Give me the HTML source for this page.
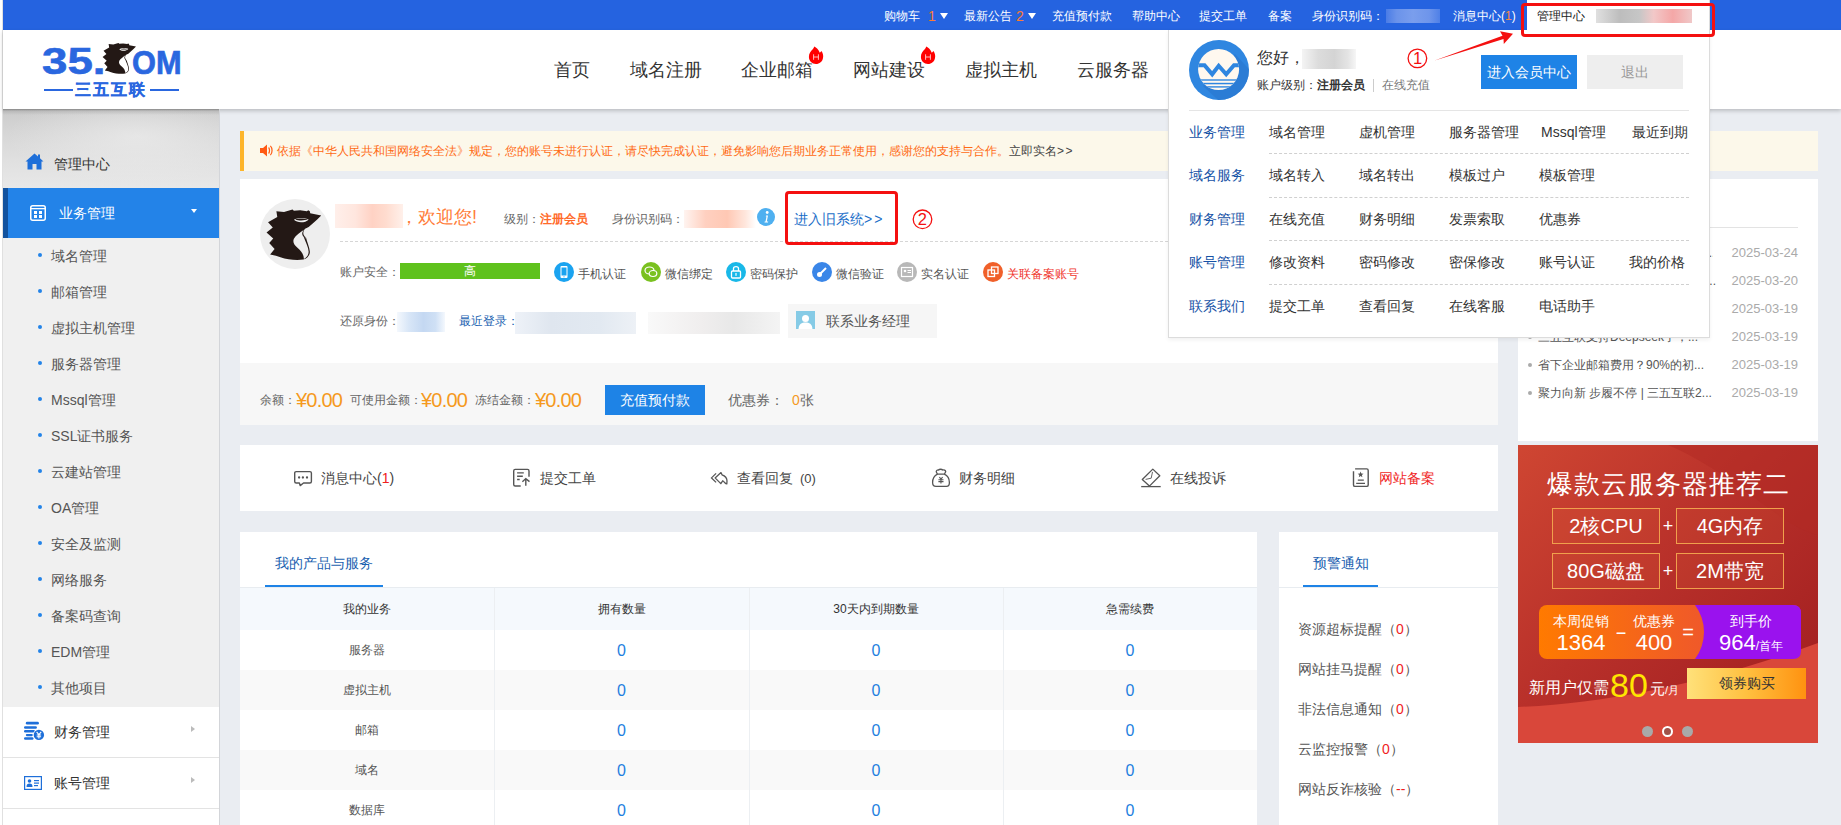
<!DOCTYPE html>
<html><head><meta charset="utf-8">
<style>
*{margin:0;padding:0;box-sizing:border-box}
html,body{width:1841px;height:825px;overflow:hidden}
body{position:relative;background:#eaedf2;font-family:"Liberation Sans",sans-serif;color:#333;font-size:14px}
.a{position:absolute}
.t{position:absolute;white-space:nowrap;line-height:20px}
.blur{position:absolute}
</style></head><body>
<!-- left strip -->
<div class="a" style="left:0;top:0;width:2px;height:825px;background:#fff"></div><div class="a" style="left:2px;top:0;width:1px;height:825px;background:#e0e0e0"></div>

<!-- TOP BAR -->
<div id="topbar" class="a" style="left:3px;top:0;width:1838px;height:30px;background:#2563e0">
</div>
<div class="t" style="left:884px;top:6px;font-size:12px;color:#fff">购物车</div>
<div class="t" style="left:928px;top:6px;font-size:14px;color:#ff7a2f">1</div>
<div class="a" style="left:940px;top:13px;width:0;height:0;border-left:4.5px solid transparent;border-right:4.5px solid transparent;border-top:6px solid #fff"></div>
<div class="t" style="left:964px;top:6px;font-size:12px;color:#fff">最新公告</div>
<div class="t" style="left:1016px;top:6px;font-size:14px;color:#ff7a2f">2</div>
<div class="a" style="left:1028px;top:13px;width:0;height:0;border-left:4.5px solid transparent;border-right:4.5px solid transparent;border-top:6px solid #fff"></div>
<div class="t" style="left:1052px;top:6px;font-size:12px;color:#fff">充值预付款</div>
<div class="t" style="left:1132px;top:6px;font-size:12px;color:#fff">帮助中心</div>
<div class="t" style="left:1199px;top:6px;font-size:12px;color:#fff">提交工单</div>
<div class="t" style="left:1268px;top:6px;font-size:12px;color:#fff">备案</div>
<div class="t" style="left:1312px;top:6px;font-size:12px;color:#fff">身份识别码：</div>
<div class="a" style="left:1386px;top:9px;width:54px;height:14px;background:linear-gradient(90deg,#4a7ce6,#6b93ea 20%,#7a9eed 50%,#6e95eb 80%,#4f80e7)"></div>
<div class="t" style="left:1453px;top:6px;font-size:12px;color:#fff">消息中心(<span style="color:#ff8a3a">1</span>)</div>
<div class="a" style="left:1527px;top:0;width:183px;height:31px;background:#fff;border-right:1px solid #ddd"></div>
<div class="t" style="left:1537px;top:6px;font-size:12px;color:#222">管理中心</div>
<div class="a" style="left:1596px;top:9px;width:96px;height:14px;background:linear-gradient(90deg,#e0e0e0 0%,#bdbdbd 25%,#c6c6c6 45%,#f2c8c8 60%,#f4a7a7 80%,#f0c8c8 100%)"></div>


<!-- HEADER -->
<div id="header" class="a" style="left:3px;top:30px;width:1838px;height:79px;background:#fff;box-shadow:0 2px 4px rgba(0,0,0,.2)"></div>
<!-- logo -->
<svg class="a" style="left:0;top:30px" width="200" height="79" viewBox="0 30 200 79">
<text x="42" y="73.7" font-family="Liberation Sans" font-weight="bold" font-size="36.5" fill="#2a67df" stroke="#2a67df" stroke-width="0.6" textLength="63.5" lengthAdjust="spacingAndGlyphs">35.</text>
<text x="132" y="73.5" font-family="Liberation Sans" font-weight="bold" font-size="32.5" fill="#2a67df" stroke="#2a67df" stroke-width="0.7" textLength="49.5" lengthAdjust="spacingAndGlyphs">OM</text>
<g transform="translate(102.6,43) scale(0.05475) translate(-95,-140)"><path d="M205,160 L290,168 L385,138 L400,152 L470,148 L545,158 L560,148 L578,160 L582,182 L705,205 L660,250 L610,295 L565,335 L525,355 C505,380 500,400 510,425 L522,440 L525,468 L532,440 C545,500 575,560 578,610 C578,650 550,685 505,698 C430,710 330,700 250,672 L200,655 L135,640 L185,580 L125,512 L170,462 L95,395 L165,340 L112,282 L215,222 L205,160 Z" fill="#231815"/><path d="M513,365 C493,390 488,405 498,428 L510,445 C533,505 562,560 565,610 C565,645 545,675 512,690 C508,640 485,600 440,565 C400,535 385,500 400,465 C420,430 470,395 513,365 Z" fill="#fff"/><path d="M400,255 C440,225 530,228 565,250 C530,290 440,295 400,255 Z" fill="#fff"/><path d="M415,250 C450,236 520,238 556,249 C520,263 455,266 415,250 Z" fill="#231815"/></g>
</svg>
<div class="a" style="left:44px;top:89px;width:29px;height:2px;background:#2a67df"></div>
<div class="a" style="left:150px;top:89px;width:29px;height:2px;background:#2a67df"></div>
<div class="t" style="left:75px;top:80px;font-size:16px;line-height:20px;font-weight:bold;color:#2a67df;letter-spacing:2px;-webkit-text-stroke:0.3px #2a67df">三五互联</div>
<!-- nav -->
<div class="t" style="left:554px;top:58px;font-size:18px;line-height:24px;color:#333">首页</div>
<div class="t" style="left:630px;top:58px;font-size:18px;line-height:24px;color:#333">域名注册</div>
<div class="t" style="left:741px;top:58px;font-size:18px;line-height:24px;color:#333">企业邮箱</div>
<div class="t" style="left:853px;top:58px;font-size:18px;line-height:24px;color:#333">网站建设</div>
<div class="t" style="left:965px;top:58px;font-size:18px;line-height:24px;color:#333">虚拟主机</div>
<div class="t" style="left:1077px;top:58px;font-size:18px;line-height:24px;color:#333">云服务器</div>
<svg class="a" style="left:808px;top:46px" width="16" height="19" viewBox="0 0 16 19"><path d="M6.2,0.5 C8.5,1.5 10.5,3.5 11.8,6.7 L13.5,4.9 C15,7 15.5,9.5 15,12 C14.5,15.5 11.5,18 8,18 C4,18 1,15 0.9,11 C0.8,7.5 3,5 4.5,3.5 C5.5,2.5 6,1.5 6.2,0.5 Z" fill="#ff0000"/><path d="M5.6,8.3 V13.8 M10.4,8.3 V13.8 M5.6,11 H10.4" stroke="#ffd0d0" stroke-width="0.9" fill="none"/></svg>
<svg class="a" style="left:920px;top:46px" width="16" height="19" viewBox="0 0 16 19"><path d="M6.2,0.5 C8.5,1.5 10.5,3.5 11.8,6.7 L13.5,4.9 C15,7 15.5,9.5 15,12 C14.5,15.5 11.5,18 8,18 C4,18 1,15 0.9,11 C0.8,7.5 3,5 4.5,3.5 C5.5,2.5 6,1.5 6.2,0.5 Z" fill="#ff0000"/><path d="M5.6,8.3 V13.8 M10.4,8.3 V13.8 M5.6,11 H10.4" stroke="#ffd0d0" stroke-width="0.9" fill="none"/></svg>


<!-- SIDEBAR -->
<div id="sidebar" class="a" style="left:3px;top:109px;width:217px;height:716px;background:#fff;border-right:1px solid #d3d5d9"></div>
<div class="a" style="left:3px;top:109px;width:216px;height:79px;background:linear-gradient(180deg,rgba(110,110,110,.75) 0px,rgba(150,150,150,.35) 2px,rgba(200,200,200,0) 6px),radial-gradient(ellipse 60% 60% at 62% 35%,rgba(240,240,240,.6),rgba(240,240,240,0)),linear-gradient(180deg,#cbcbcb 0%,#d6d6d6 30%,#e0e0e0 65%,#e8e8e8 100%)"></div>
<svg class="a" style="left:25px;top:153px" width="19" height="17" viewBox="0 0 19 17"><path d="M9.5,0.5 L0.5,8.5 L2.5,8.5 L2.5,16.5 L7.5,16.5 L7.5,11 L11.5,11 L11.5,16.5 L16.5,16.5 L16.5,8.5 L18.5,8.5 L15,5.2 L15,1.5 L13,1.5 L13,3.5 Z" fill="#1e6fd9"/></svg>
<div class="t" style="left:54px;top:154px;font-size:14px;color:#333">管理中心</div>
<div class="a" style="left:3px;top:188px;width:216px;height:50px;background:#2383e8"></div>
<div class="a" style="left:3px;top:188px;width:5px;height:50px;background:#12529e"></div>
<svg class="a" style="left:30px;top:205px" width="16" height="16" viewBox="0 0 16 16"><rect x="0.75" y="0.75" width="14.5" height="14.5" rx="2" fill="none" stroke="#fff" stroke-width="1.5"/><rect x="1" y="3" width="14" height="1.3" fill="#fff"/><rect x="4" y="6" width="3" height="3" fill="#fff"/><rect x="9" y="6" width="3" height="3" fill="#fff"/><rect x="4" y="10" width="3" height="3" fill="#fff"/><rect x="9" y="10" width="3" height="3" fill="#fff"/></svg>
<div class="t" style="left:59px;top:203px;font-size:14px;color:#fff">业务管理</div>
<div class="a" style="left:191px;top:209px;width:0;height:0;border-left:3.5px solid transparent;border-right:3.5px solid transparent;border-top:4px solid #fff"></div>
<div class="a" style="left:3px;top:238px;width:216px;height:469px;background:#f0f0f0"></div>
<div class="a" style="left:38px;top:253px;width:4px;height:4px;border-radius:50%;background:#2383e8"></div>
<div class="t" style="left:51px;top:246px;font-size:14px;color:#555">域名管理</div>
<div class="a" style="left:38px;top:289px;width:4px;height:4px;border-radius:50%;background:#2383e8"></div>
<div class="t" style="left:51px;top:282px;font-size:14px;color:#555">邮箱管理</div>
<div class="a" style="left:38px;top:325px;width:4px;height:4px;border-radius:50%;background:#2383e8"></div>
<div class="t" style="left:51px;top:318px;font-size:14px;color:#555">虚拟主机管理</div>
<div class="a" style="left:38px;top:361px;width:4px;height:4px;border-radius:50%;background:#2383e8"></div>
<div class="t" style="left:51px;top:354px;font-size:14px;color:#555">服务器管理</div>
<div class="a" style="left:38px;top:397px;width:4px;height:4px;border-radius:50%;background:#2383e8"></div>
<div class="t" style="left:51px;top:390px;font-size:14px;color:#555">Mssql管理</div>
<div class="a" style="left:38px;top:433px;width:4px;height:4px;border-radius:50%;background:#2383e8"></div>
<div class="t" style="left:51px;top:426px;font-size:14px;color:#555">SSL证书服务</div>
<div class="a" style="left:38px;top:469px;width:4px;height:4px;border-radius:50%;background:#2383e8"></div>
<div class="t" style="left:51px;top:462px;font-size:14px;color:#555">云建站管理</div>
<div class="a" style="left:38px;top:505px;width:4px;height:4px;border-radius:50%;background:#2383e8"></div>
<div class="t" style="left:51px;top:498px;font-size:14px;color:#555">OA管理</div>
<div class="a" style="left:38px;top:541px;width:4px;height:4px;border-radius:50%;background:#2383e8"></div>
<div class="t" style="left:51px;top:534px;font-size:14px;color:#555">安全及监测</div>
<div class="a" style="left:38px;top:577px;width:4px;height:4px;border-radius:50%;background:#2383e8"></div>
<div class="t" style="left:51px;top:570px;font-size:14px;color:#555">网络服务</div>
<div class="a" style="left:38px;top:613px;width:4px;height:4px;border-radius:50%;background:#2383e8"></div>
<div class="t" style="left:51px;top:606px;font-size:14px;color:#555">备案码查询</div>
<div class="a" style="left:38px;top:649px;width:4px;height:4px;border-radius:50%;background:#2383e8"></div>
<div class="t" style="left:51px;top:642px;font-size:14px;color:#555">EDM管理</div>
<div class="a" style="left:38px;top:685px;width:4px;height:4px;border-radius:50%;background:#2383e8"></div>
<div class="t" style="left:51px;top:678px;font-size:14px;color:#555">其他项目</div>
<div class="a" style="left:3px;top:757px;width:216px;height:1px;background:#e3e3e3"></div>
<div class="a" style="left:3px;top:808px;width:216px;height:1px;background:#e3e3e3"></div>
<svg class="a" style="left:24px;top:721px" width="22" height="21" viewBox="0 0 22 21"><rect x="1.8" y="0.8" width="13.1" height="2.7" rx="1.3" fill="#1e6fd9"/><rect x="0" y="5.2" width="12.9" height="2.5" rx="1.2" fill="#1e6fd9"/><rect x="0" y="9" width="11" height="2.5" rx="1.2" fill="#1e6fd9"/><rect x="1.8" y="13" width="7" height="2.2" rx="1.1" fill="#1e6fd9"/><rect x="0" y="16.3" width="9.5" height="2.5" rx="1.2" fill="#1e6fd9"/><circle cx="14.9" cy="13.9" r="5.8" fill="#fff"/><circle cx="14.9" cy="13.9" r="5.2" fill="#1e6fd9"/><path d="M12.6,10.8 L14.9,13.6 L17.2,10.8 M14.9,13.6 L14.9,17.6 M12.7,14 L17.1,14 M12.7,15.7 L17.1,15.7" stroke="#fff" stroke-width="1.1" fill="none"/></svg>
<div class="t" style="left:54px;top:722px;font-size:14px;color:#333">财务管理</div>
<div class="a" style="left:191px;top:726px;width:0;height:0;border-top:3.5px solid transparent;border-bottom:3.5px solid transparent;border-left:4px solid #bbb"></div>
<svg class="a" style="left:24px;top:776px" width="18" height="14" viewBox="0 0 18 14"><rect x="0.6" y="0.6" width="16.8" height="12.8" fill="none" stroke="#1e6fd9" stroke-width="1.2"/><circle cx="5.5" cy="5" r="1.8" fill="#1e6fd9"/><path d="M2.5,11 C2.5,8 3.5,7.5 5.5,7.5 C7.5,7.5 8.5,8 8.5,11 Z" fill="#1e6fd9"/><rect x="10" y="4" width="5" height="1.2" fill="#1e6fd9"/><rect x="10" y="6.5" width="5" height="1.2" fill="#1e6fd9"/><rect x="10" y="9" width="4" height="1.2" fill="#1e6fd9"/></svg>
<div class="t" style="left:54px;top:773px;font-size:14px;color:#333">账号管理</div>
<div class="a" style="left:191px;top:777px;width:0;height:0;border-top:3.5px solid transparent;border-bottom:3.5px solid transparent;border-left:4px solid #bbb"></div>


<!-- MAIN -->
<div id="main">
<!-- notice -->
<div class="a" style="left:240px;top:131px;width:1578px;height:40px;background:#fcf8ea;border-left:4px solid #fdb52a"></div>
<svg class="a" style="left:260px;top:144px" width="13" height="13" viewBox="0 0 13 13"><path d="M0,4 L3,4 L7,0.5 L7,12.5 L3,9 L0,9 Z" fill="#ff5a14"/><path d="M8.6,3.5 C9.8,4.8 9.8,8.2 8.6,9.5" stroke="#ff5a14" stroke-width="1.2" fill="none"/><path d="M10.4,1.8 C12.6,4 12.6,9 10.4,11.2" stroke="#ff5a14" stroke-width="1.2" fill="none"/></svg>
<div class="t" style="left:277px;top:141px;font-size:12px;color:#ff6a14">依据《中华人民共和国网络安全法》规定，您的账号未进行认证，请尽快完成认证，避免影响您后期业务正常使用，感谢您的支持与合作。<span style="color:#444">立即实名<span style="letter-spacing:1.5px">&gt;&gt;</span></span></div>

<!-- user card -->
<div class="a" style="left:240px;top:179px;width:1258px;height:184px;background:#fff"></div>
<div class="a" style="left:240px;top:363px;width:1258px;height:62px;background:#f7f7f7"></div>
<div class="a" style="left:260px;top:199px;width:70px;height:70px;border-radius:50%;background:#eee"></div>
<svg class="a" style="left:258px;top:197px" width="74" height="74" viewBox="0 0 825 825"><path d="M205,160 L290,168 L385,138 L400,152 L470,148 L545,158 L560,148 L578,160 L582,182 L705,205 L660,250 L610,295 L565,335 L525,355 C505,380 500,400 510,425 L522,440 L525,468 L532,440 C545,500 575,560 578,610 C578,650 550,685 505,698 C430,710 330,700 250,672 L200,655 L135,640 L185,580 L125,512 L170,462 L95,395 L165,340 L112,282 L215,222 L205,160 Z" fill="#231815"/><path d="M513,365 C493,390 488,405 498,428 L510,445 C533,505 562,560 565,610 C565,645 545,675 512,690 C508,640 485,600 440,565 C400,535 385,500 400,465 C420,430 470,395 513,365 Z" fill="#eee"/><path d="M400,255 C440,225 530,228 565,250 C530,290 440,295 400,255 Z" fill="#eee"/><path d="M415,250 C450,236 520,238 556,249 C520,263 455,266 415,250 Z" fill="#231815"/></svg>
<div class="a" style="left:335px;top:204px;width:68px;height:24px;background:linear-gradient(90deg,#ffefea,#ffe6de 30%,#ffd2c4 55%,#ffdccf 75%,#fff0ea)"></div>
<div class="t" style="left:400px;top:205px;font-size:18px;line-height:24px;color:#ff7d3a">，欢迎您!</div>
<div class="t" style="left:504px;top:209px;font-size:12px;color:#666">级别：<span style="color:#ff6a2a;font-weight:bold">注册会员</span></div>
<div class="t" style="left:612px;top:209px;font-size:12px;color:#666">身份识别码：</div>
<div class="a" style="left:684px;top:210px;width:72px;height:18px;background:linear-gradient(90deg,#fff4f0,#ffd0c0 30%,#ffc8b4 60%,#ffe6dc 85%,#fff)"></div>
<svg class="a" style="left:757px;top:208px" width="18" height="18" viewBox="0 0 18 18"><circle cx="9" cy="9" r="9" fill="#4fb0f0"/><circle cx="10.2" cy="4.5" r="1.4" fill="#fff"/><path d="M9,7.5 L11,7.5 L9.8,13.5 L11.2,13.5 L11,14.5 L7.5,14.5 L7.7,13.5 L8.5,13.5 L9.5,8.5 L8.8,8.5 Z" fill="#fff"/></svg>
<div class="t" style="left:794px;top:209px;font-size:14px;color:#1a6ec8">进入旧系统<span style="letter-spacing:2px">&gt;&gt;</span></div>
<div class="a" style="left:340px;top:241px;width:828px;height:0;border-top:1px dashed #d6d6d6"></div>
<div class="t" style="left:340px;top:262px;font-size:12px;color:#666">账户安全：</div>
<div class="a" style="left:400px;top:263px;width:140px;height:16px;background:#5fc21d;color:#fff;font-size:12px;line-height:16px;text-align:center">高</div>
<svg class="a" style="left:554px;top:262px;color:#1aa3f0" width="20" height="20" viewBox="0 0 20 20"><circle cx="10" cy="10" r="10" fill="#1aa3f0"/><rect x="6.5" y="4" width="7" height="12" rx="1" fill="#fff"/><rect x="7.5" y="5.5" width="5" height="8" fill="currentColor"/><circle cx="10" cy="14.8" r="0.6" fill="currentColor"/></svg>
<div class="t" style="left:578px;top:264px;font-size:12px;color:#555">手机认证</div>
<svg class="a" style="left:641px;top:262px;color:#7ac120" width="20" height="20" viewBox="0 0 20 20"><circle cx="10" cy="10" r="10" fill="#7ac120"/><ellipse cx="8.5" cy="8.5" rx="4.5" ry="3.5" fill="none" stroke="#fff" stroke-width="1.2"/><ellipse cx="12" cy="11.5" rx="3.8" ry="3" fill="currentColor" stroke="#fff" stroke-width="1.2"/></svg>
<div class="t" style="left:665px;top:264px;font-size:12px;color:#555">微信绑定</div>
<svg class="a" style="left:726px;top:262px;color:#19b8e8" width="20" height="20" viewBox="0 0 20 20"><circle cx="10" cy="10" r="10" fill="#19b8e8"/><rect x="5.5" y="9" width="9" height="7" rx="1" fill="none" stroke="#fff" stroke-width="1.3"/><path d="M7.5,9 L7.5,6.5 C7.5,4 12.5,4 12.5,6.5 L12.5,9" fill="none" stroke="#fff" stroke-width="1.3"/><rect x="9.4" y="11" width="1.2" height="2.8" fill="#fff"/></svg>
<div class="t" style="left:750px;top:264px;font-size:12px;color:#555">密码保护</div>
<svg class="a" style="left:812px;top:262px;color:#3a86e8" width="20" height="20" viewBox="0 0 20 20"><circle cx="10" cy="10" r="10" fill="#3a86e8"/><circle cx="7.5" cy="12.5" r="2.5" fill="#fff"/><path d="M8.5,11.5 L14,6" stroke="#fff" stroke-width="2"/></svg>
<div class="t" style="left:836px;top:264px;font-size:12px;color:#555">微信验证</div>
<svg class="a" style="left:897px;top:262px;color:#b8b8b8" width="20" height="20" viewBox="0 0 20 20"><circle cx="10" cy="10" r="10" fill="#b8b8b8"/><rect x="4.5" y="5.5" width="11" height="9" fill="none" stroke="#fff" stroke-width="1.2"/><circle cx="8" cy="9" r="1.3" fill="#fff"/><rect x="10.5" y="8" width="3.5" height="1" fill="#fff"/><rect x="10.5" y="10" width="3.5" height="1" fill="#fff"/></svg>
<div class="t" style="left:921px;top:264px;font-size:12px;color:#555">实名认证</div>
<svg class="a" style="left:983px;top:262px;color:#f0602a" width="20" height="20" viewBox="0 0 20 20"><circle cx="10" cy="10" r="10" fill="#f0602a"/><rect x="5" y="8" width="6.5" height="6.5" fill="none" stroke="#fff" stroke-width="1.3"/><rect x="8.5" y="5" width="6.5" height="6.5" fill="none" stroke="#fff" stroke-width="1.3"/></svg>
<div class="t" style="left:1007px;top:264px;font-size:12px;color:#f0362e">关联备案账号</div>
<div class="t" style="left:340px;top:311px;font-size:12px;color:#666">还原身份：</div>
<div class="a" style="left:397px;top:312px;width:48px;height:20px;background:linear-gradient(90deg,#f4f8fd,#d8e6f7 25%,#c4d8f2 55%,#cfe0f5 80%,#f4f8fd)"></div>
<div class="t" style="left:459px;top:311px;font-size:12px;color:#1a5fb0">最近登录：</div>
<div class="a" style="left:515px;top:312px;width:121px;height:22px;background:linear-gradient(90deg,#eef2f8,#dfe6ef 30%,#e2e9f1 70%,#edf1f6)"></div>
<div class="a" style="left:648px;top:312px;width:132px;height:22px;background:linear-gradient(90deg,#f9f9f9,#f0eeee 40%,#e8e8e8 65%,#f4f4f4)"></div>
<div class="a" style="left:788px;top:304px;width:149px;height:34px;background:#f6f6f6"></div>
<svg class="a" style="left:796px;top:311px" width="19" height="18" viewBox="0 0 19 18" preserveAspectRatio="none"><rect width="19" height="19" fill="#86cbe6"/><circle cx="9.5" cy="7.5" r="3.5" fill="#fff"/><path d="M2.5,19 C2.5,13 5.5,11.5 9.5,11.5 C13.5,11.5 16.5,13 16.5,19 Z" fill="#fff"/></svg>
<div class="t" style="left:826px;top:311px;font-size:14px;color:#555">联系业务经理</div>

<!-- balance -->
<div class="t" style="left:260px;top:390px;font-size:12px;color:#666">余额：</div>
<div class="t" style="left:296px;top:387px;font-size:20px;line-height:26px;color:#f59a1e;letter-spacing:-0.8px">¥0.00</div>
<div class="t" style="left:350px;top:390px;font-size:12px;color:#666">可使用金额：</div>
<div class="t" style="left:421px;top:387px;font-size:20px;line-height:26px;color:#f59a1e;letter-spacing:-0.8px">¥0.00</div>
<div class="t" style="left:475px;top:390px;font-size:12px;color:#666">冻结金额：</div>
<div class="t" style="left:535px;top:387px;font-size:20px;line-height:26px;color:#f59a1e;letter-spacing:-0.8px">¥0.00</div>
<div class="a" style="left:605px;top:385px;width:100px;height:30px;background:#1e83e6;color:#fff;font-size:14px;line-height:30px;text-align:center">充值预付款</div>
<div class="t" style="left:728px;top:390px;font-size:14px;color:#666">优惠券：<span style="color:#f59a1e;margin-left:8px">0</span>张</div>

<!-- shortcuts -->
<div class="a" style="left:240px;top:445px;width:1258px;height:66px;background:#fff"></div>
<svg class="a" style="left:289px;top:465px" width="28" height="26" viewBox="0 0 28 26"><path d="M10.4,18 L7.2,18 Q5.7,18 5.7,16.5 L5.7,8.1 Q5.7,6.6 7.2,6.6 L20.9,6.6 Q22.4,6.6 22.4,8.1 L22.4,16.5 Q22.4,18 20.9,18 L14.5,18 L11.2,20.6 Z" fill="none" stroke="#555" stroke-width="1.4" stroke-linejoin="round"/><circle cx="10.1" cy="12.5" r="1.15" fill="#555"/><circle cx="13.9" cy="12.5" r="1.15" fill="#555"/><circle cx="18" cy="12.5" r="1.15" fill="#555"/></svg>
<svg class="a" style="left:508px;top:465px" width="28" height="26" viewBox="0 0 28 26"><path d="M12.7,21 L7.2,21 Q5.7,21 5.7,19.5 L5.7,5.9 Q5.7,4.4 7.2,4.4 L19.5,4.4 Q21,4.4 21,5.9 L21,11.8" fill="none" stroke="#555" stroke-width="1.4"/><path d="M9.1,7.9 L15.8,7.9 M9.1,11.2 L14.8,11.2 M9.1,14.5 L11.7,14.5" stroke="#555" stroke-width="1.4"/><path d="M17.8,14 L17.8,20.8 M14.4,16.7 L17.8,13.6 L21.5,16.6" fill="none" stroke="#555" stroke-width="1.4"/></svg>
<svg class="a" style="left:706px;top:465px" width="28" height="26" viewBox="0 0 28 26"><path d="M10.1,8.4 L5.5,12.9 L10.1,17.4" fill="none" stroke="#555" stroke-width="1.3"/><path d="M9.1,12.9 L15,7.6 L16,9.8 C19,10.8 21,13 21,16 L20.8,18.9 C19.5,19 18.5,17 16.7,15.8 L14.8,18.6 Z" fill="none" stroke="#555" stroke-width="1.3" stroke-linejoin="round"/></svg>
<svg class="a" style="left:927px;top:463px" width="28" height="28" viewBox="0 0 28 28"><path d="M10.5,11.2 L9.2,8.8 C9.5,7.2 10.5,6.8 11.5,7 C12.3,6 14.8,6 15.8,7 C17,6.6 18.5,7.2 18.7,8.7 L17.3,11.2 Z" fill="none" stroke="#555" stroke-width="1.3" stroke-linejoin="round"/><path d="M10.5,11.2 C7,13 5.6,16.5 5.6,19.5 C5.6,22 7,23.4 9,23.4 L19.5,23.4 C21.5,23.4 22.4,22 22.4,19.5 C22.4,16.5 21,13 17.3,11.2" fill="none" stroke="#555" stroke-width="1.3"/><path d="M12.4,14.2 L13.95,16.2 L15.6,14.2 M13.95,16.2 L13.95,20.4 M11.4,16.8 L16.5,16.8 M11.4,18.6 L16.5,18.6" fill="none" stroke="#555" stroke-width="1.1"/></svg>
<svg class="a" style="left:1138px;top:465px" width="28" height="26" viewBox="0 0 28 26"><path d="M14.8,4.1 L21.8,10.7 L11.4,21.1 L4.3,14.5 Z" fill="none" stroke="#555" stroke-width="1.3" stroke-linejoin="round"/><path d="M14.5,6.9 L13.2,13.2 L7.6,14.4" fill="none" stroke="#666" stroke-width="1"/><path d="M3.2,21.6 L22.7,21.6" stroke="#555" stroke-width="1.3"/></svg>
<svg class="a" style="left:1348px;top:465px" width="28" height="26" viewBox="0 0 28 26"><path d="M7.1,3.9 L18.7,3.9 Q20.2,3.9 20.2,5.4 L20.2,19.9 Q20.2,21.4 18.7,21.4 L7,21.4 Q5.5,21.4 5.5,19.9 L5.5,6.2" fill="none" stroke="#555" stroke-width="1.4"/><polygon points="12.60,6.60 13.39,8.61 15.55,8.74 13.88,10.12 14.42,12.21 12.60,11.05 10.78,12.21 11.32,10.12 9.65,8.74 11.81,8.61" fill="#555"/><path d="M9.8,15.1 L15.8,15.1 M8.2,18.3 L17,18.3" stroke="#555" stroke-width="1.3"/></svg>
<div class="t" style="left:321px;top:468px;font-size:14px;color:#444">消息中心(<span style="color:#f02020">1</span>)</div>
<div class="t" style="left:540px;top:468px;font-size:14px;color:#444">提交工单</div>
<div class="t" style="left:737px;top:468px;font-size:14px;color:#444">查看回复 <span style="font-size:13px;margin-left:3px">(0)</span></div>
<div class="t" style="left:959px;top:468px;font-size:14px;color:#444">财务明细</div>
<div class="t" style="left:1170px;top:468px;font-size:14px;color:#444">在线投诉</div>
<div class="t" style="left:1379px;top:468px;font-size:14px;color:#f02828">网站备案</div>
<div class="a" style="left:240px;top:532px;width:1017px;height:293px;background:#fff"></div>
<div class="t" style="left:275px;top:553px;font-size:14px;color:#1a5fb0">我的产品与服务</div>
<div class="a" style="left:240px;top:587px;width:1017px;height:1px;background:#e8ecf0"></div>
<div class="a" style="left:265px;top:585px;width:118px;height:2px;background:#1e83e6"></div>
<div class="a" style="left:240px;top:588px;width:1017px;height:42px;background:#f5f9fd"></div>
<div class="a" style="left:240px;top:670px;width:1017px;height:40px;background:#f9f9f9"></div>
<div class="a" style="left:240px;top:750px;width:1017px;height:40px;background:#f9f9f9"></div>
<div class="a" style="left:494px;top:588px;width:1px;height:237px;background:#eceff2"></div>
<div class="a" style="left:749px;top:588px;width:1px;height:237px;background:#eceff2"></div>
<div class="a" style="left:1003px;top:588px;width:1px;height:237px;background:#eceff2"></div>
<div class="a" style="left:240px;top:599px;width:254px;text-align:center;font-size:12px;line-height:20px;color:#333">我的业务</div>
<div class="a" style="left:494px;top:599px;width:255px;text-align:center;font-size:12px;line-height:20px;color:#333">拥有数量</div>
<div class="a" style="left:749px;top:599px;width:254px;text-align:center;font-size:12px;line-height:20px;color:#333">30天内到期数量</div>
<div class="a" style="left:1003px;top:599px;width:254px;text-align:center;font-size:12px;line-height:20px;color:#333">急需续费</div>
<div class="a" style="left:240px;top:640px;width:254px;text-align:center;font-size:12px;line-height:20px;color:#555">服务器</div>
<div class="a" style="left:494px;top:640px;width:255px;text-align:center;font-size:16px;line-height:22px;color:#1e7fe0">0</div>
<div class="a" style="left:749px;top:640px;width:254px;text-align:center;font-size:16px;line-height:22px;color:#1e7fe0">0</div>
<div class="a" style="left:1003px;top:640px;width:254px;text-align:center;font-size:16px;line-height:22px;color:#1e7fe0">0</div>
<div class="a" style="left:240px;top:680px;width:254px;text-align:center;font-size:12px;line-height:20px;color:#555">虚拟主机</div>
<div class="a" style="left:494px;top:680px;width:255px;text-align:center;font-size:16px;line-height:22px;color:#1e7fe0">0</div>
<div class="a" style="left:749px;top:680px;width:254px;text-align:center;font-size:16px;line-height:22px;color:#1e7fe0">0</div>
<div class="a" style="left:1003px;top:680px;width:254px;text-align:center;font-size:16px;line-height:22px;color:#1e7fe0">0</div>
<div class="a" style="left:240px;top:720px;width:254px;text-align:center;font-size:12px;line-height:20px;color:#555">邮箱</div>
<div class="a" style="left:494px;top:720px;width:255px;text-align:center;font-size:16px;line-height:22px;color:#1e7fe0">0</div>
<div class="a" style="left:749px;top:720px;width:254px;text-align:center;font-size:16px;line-height:22px;color:#1e7fe0">0</div>
<div class="a" style="left:1003px;top:720px;width:254px;text-align:center;font-size:16px;line-height:22px;color:#1e7fe0">0</div>
<div class="a" style="left:240px;top:760px;width:254px;text-align:center;font-size:12px;line-height:20px;color:#555">域名</div>
<div class="a" style="left:494px;top:760px;width:255px;text-align:center;font-size:16px;line-height:22px;color:#1e7fe0">0</div>
<div class="a" style="left:749px;top:760px;width:254px;text-align:center;font-size:16px;line-height:22px;color:#1e7fe0">0</div>
<div class="a" style="left:1003px;top:760px;width:254px;text-align:center;font-size:16px;line-height:22px;color:#1e7fe0">0</div>
<div class="a" style="left:240px;top:800px;width:254px;text-align:center;font-size:12px;line-height:20px;color:#555">数据库</div>
<div class="a" style="left:494px;top:800px;width:255px;text-align:center;font-size:16px;line-height:22px;color:#1e7fe0">0</div>
<div class="a" style="left:749px;top:800px;width:254px;text-align:center;font-size:16px;line-height:22px;color:#1e7fe0">0</div>
<div class="a" style="left:1003px;top:800px;width:254px;text-align:center;font-size:16px;line-height:22px;color:#1e7fe0">0</div>
<div class="a" style="left:1279px;top:532px;width:219px;height:293px;background:#fff"></div>
<div class="t" style="left:1313px;top:553px;font-size:14px;color:#1a5fb0">预警通知</div>
<div class="a" style="left:1279px;top:587px;width:219px;height:1px;background:#e8ecf0"></div>
<div class="a" style="left:1303px;top:585px;width:75px;height:2px;background:#1e83e6"></div>
<div class="t" style="left:1298px;top:619px;font-size:14px;color:#555">资源超标提醒（<span style="color:#f01e1e">0</span>）</div>
<div class="t" style="left:1298px;top:659px;font-size:14px;color:#555">网站挂马提醒（<span style="color:#f01e1e">0</span>）</div>
<div class="t" style="left:1298px;top:699px;font-size:14px;color:#555">非法信息通知（<span style="color:#f01e1e">0</span>）</div>
<div class="t" style="left:1298px;top:739px;font-size:14px;color:#555">云监控报警（<span style="color:#f01e1e">0</span>）</div>
<div class="t" style="left:1298px;top:779px;font-size:14px;color:#555">网站反诈核验（<span style="color:#f01e1e">--</span>）</div>
</div>

<!-- RIGHT -->
<div id="right">
<div class="a" style="left:1518px;top:179px;width:300px;height:262px;background:#fff"></div>
<div class="a" style="left:1538px;top:227px;width:260px;height:1px;background:#e3e3e3"></div>
<div class="a" style="left:1528px;top:251px;width:4px;height:4px;border-radius:50%;background:#aaa"></div>
<div class="t" style="left:1538px;top:243px;width:175px;overflow:hidden;text-align:right;font-size:12px;color:#555">三五互联2025年度云服务器大促...</div>
<div class="t" style="left:1700px;top:243px;width:98px;text-align:right;font-size:13px;color:#aaa">2025-03-24</div>
<div class="a" style="left:1528px;top:279px;width:4px;height:4px;border-radius:50%;background:#aaa"></div>
<div class="t" style="left:1538px;top:271px;width:178px;overflow:hidden;text-align:right;font-size:12px;color:#555">企业邮箱安全防护升级公告公告...</div>
<div class="t" style="left:1700px;top:271px;width:98px;text-align:right;font-size:13px;color:#aaa">2025-03-20</div>
<div class="a" style="left:1528px;top:307px;width:4px;height:4px;border-radius:50%;background:#aaa"></div>
<div class="t" style="left:1538px;top:299px;font-size:12px;color:#555">三五互联邮箱新功能上线...</div>
<div class="t" style="left:1700px;top:299px;width:98px;text-align:right;font-size:13px;color:#aaa">2025-03-19</div>
<div class="a" style="left:1528px;top:335px;width:4px;height:4px;border-radius:50%;background:#aaa"></div>
<div class="t" style="left:1538px;top:327px;font-size:12px;color:#555">三五互联支持Deepseek了，...</div>
<div class="t" style="left:1700px;top:327px;width:98px;text-align:right;font-size:13px;color:#aaa">2025-03-19</div>
<div class="a" style="left:1528px;top:363px;width:4px;height:4px;border-radius:50%;background:#aaa"></div>
<div class="t" style="left:1538px;top:355px;font-size:12px;color:#555">省下企业邮箱费用？90%的初...</div>
<div class="t" style="left:1700px;top:355px;width:98px;text-align:right;font-size:13px;color:#aaa">2025-03-19</div>
<div class="a" style="left:1528px;top:391px;width:4px;height:4px;border-radius:50%;background:#aaa"></div>
<div class="t" style="left:1538px;top:383px;font-size:12px;color:#555">聚力向新 步履不停 | 三五互联2...</div>
<div class="t" style="left:1700px;top:383px;width:98px;text-align:right;font-size:13px;color:#aaa">2025-03-19</div>
<!-- ad -->
<div class="a" style="left:1518px;top:445px;width:300px;height:298px;overflow:hidden;background:linear-gradient(135deg,#cf4632 0%,#b8302a 45%,#9e1c1e 100%)">
 <svg class="a" style="left:0;top:0" width="300" height="298" viewBox="0 0 300 298"><path d="M0,262 C90,258 190,238 300,198 L300,298 L0,298 Z" fill="#d9473a"/><path d="M150,0 C220,30 260,80 300,90 L300,0 Z" fill="#b22a24" opacity=".5"/></svg>
 <div class="t" style="left:0;top:22px;width:300px;text-align:center;font-size:26px;line-height:34px;color:#fff;letter-spacing:1px">爆款云服务器推荐二</div>
 <div class="a" style="left:34px;top:63px;width:108px;height:36px;border:1px solid #f0a04c;background:rgba(255,140,70,.10);color:#fff;font-size:20px;line-height:34px;text-align:center">2核CPU</div>
 <div class="a" style="left:158px;top:63px;width:108px;height:36px;border:1px solid #f0a04c;background:rgba(255,140,70,.10);color:#fff;font-size:20px;line-height:34px;text-align:center">4G内存</div>
 <div class="a" style="left:34px;top:108px;width:108px;height:36px;border:1px solid #f0a04c;background:rgba(255,140,70,.10);color:#fff;font-size:20px;line-height:34px;text-align:center">80G磁盘</div>
 <div class="a" style="left:158px;top:108px;width:108px;height:36px;border:1px solid #f0a04c;background:rgba(255,140,70,.10);color:#fff;font-size:20px;line-height:34px;text-align:center">2M带宽</div>
 <div class="t" style="left:143px;top:69px;width:14px;text-align:center;font-size:18px;line-height:24px;color:#fff">+</div>
 <div class="t" style="left:143px;top:114px;width:14px;text-align:center;font-size:18px;line-height:24px;color:#fff">+</div>
 <div class="a" style="left:21px;top:160px;width:262px;height:54px;border-radius:8px;background:linear-gradient(90deg,#ff7a00 0%,#f05a28 60%,#e8443a 100%)"></div>
 <svg class="a" style="left:0;top:0" width="300" height="298" viewBox="0 0 300 298"><path d="M177,160 L275,160 Q283,160 283,168 L283,206 Q283,214 275,214 L177,214 A45,45 0 0 0 177,160 Z" fill="#9a12ee"/></svg>
 <div class="t" style="left:28px;top:167px;width:70px;text-align:center;font-size:14px;line-height:18px;color:#fff">本周促销</div>
 <div class="t" style="left:28px;top:185px;width:70px;text-align:center;font-size:22px;line-height:26px;color:#fff">1364</div>
 <div class="t" style="left:96px;top:176px;width:14px;text-align:center;font-size:18px;line-height:24px;color:#fff">−</div>
 <div class="t" style="left:110px;top:167px;width:52px;text-align:center;font-size:14px;line-height:18px;color:#fff">优惠券</div>
 <div class="t" style="left:110px;top:185px;width:52px;text-align:center;font-size:22px;line-height:26px;color:#fff">400</div>
 <div class="t" style="left:162px;top:175px;width:16px;text-align:center;font-size:20px;line-height:24px;color:#fff">=</div>
 <div class="t" style="left:190px;top:167px;width:86px;text-align:center;font-size:14px;line-height:18px;color:#fff">到手价</div>
 <div class="t" style="left:190px;top:185px;width:86px;text-align:center;font-size:22px;line-height:26px;color:#fff">964<span style="font-size:12px">/首年</span></div>
 <div class="t" style="left:11px;top:233px;font-size:16px;line-height:20px;color:#fff">新用户仅需</div>
 <div class="t" style="left:92px;top:222px;font-size:34px;line-height:36px;color:#ffe600">80</div>
 <div class="t" style="left:132px;top:234px;font-size:15px;line-height:20px;color:#fff">元<span style="font-size:11px">/月</span></div>
 <div class="a" style="left:169px;top:223px;width:119px;height:31px;background:linear-gradient(90deg,#ffe17a,#ffc040 50%,#ff9210);color:#333;font-size:14px;line-height:31px;text-align:center">领券购买</div>
 <div class="a" style="left:124px;top:281px;width:11px;height:11px;border-radius:50%;background:#a9a9a9"></div>
 <div class="a" style="left:144px;top:281px;width:11px;height:11px;border-radius:50%;background:#a0524a;border:2px solid #fff"></div>
 <div class="a" style="left:164px;top:281px;width:11px;height:11px;border-radius:50%;background:#a9a9a9"></div>
</div>
</div>

<!-- DROPDOWN -->
<div id="dropdown">
<div class="a" style="left:1168px;top:30px;width:542px;height:308px;background:#fff;border:1px solid #dcdcdc;border-top:none;box-shadow:0 2px 4px rgba(0,0,0,.06)"></div>
<div class="a" style="left:1527px;top:28px;width:182px;height:4px;background:#fff"></div>
<svg class="a" style="left:1189px;top:40px" width="60" height="60" viewBox="0 0 60 60">
<defs><clipPath id="cc"><circle cx="30" cy="30" r="30"/></clipPath><clipPath id="ci"><circle cx="29.6" cy="29.5" r="20.5"/></clipPath></defs>
<circle cx="30" cy="30" r="30" fill="#2f86e0"/>
<path d="M14,46 L46,14 L70,40 L40,70 Z" fill="#2a78d0" clip-path="url(#cc)" opacity=".7"/>
<g clip-path="url(#ci)">
<rect x="0" y="0" width="60" height="60" fill="#fff8ef"/>
<polyline points="4,25.2 15.5,25.2 23.2,34.3 29.7,25.8 37.2,34.3 45,25.2 56,25.2" fill="none" stroke="#2f86e0" stroke-width="4" stroke-linejoin="miter"/>
<rect x="0" y="39.3" width="60" height="1.4" fill="#2f86e0"/>
<rect x="0" y="42.8" width="60" height="1.5" fill="#2f86e0"/>
<rect x="0" y="46.2" width="60" height="1.4" fill="#2f86e0"/>
</g>
</svg>
<div class="t" style="left:1257px;top:47px;font-size:16px;line-height:22px;color:#333">您好，</div>
<div class="a" style="left:1302px;top:49px;width:54px;height:20px;background:linear-gradient(90deg,#f4f4f4,#dcdcdc 30%,#d4d4d4 60%,#e4e4e4 85%,#f6f6f6)"></div>
<div class="t" style="left:1257px;top:75px;font-size:12px;color:#333">账户级别：<b>注册会员</b></div>
<div class="a" style="left:1373px;top:79px;width:1px;height:13px;background:#ccc"></div>
<div class="t" style="left:1382px;top:75px;font-size:12px;color:#777">在线充值</div>
<div class="a" style="left:1481px;top:55px;width:96px;height:34px;background:#1e83e6;color:#fff;font-size:14px;line-height:34px;text-align:center">进入会员中心</div>
<div class="a" style="left:1587px;top:55px;width:96px;height:34px;background:#eee;color:#999;font-size:14px;line-height:34px;text-align:center">退出</div>
<div class="a" style="left:1189px;top:110px;width:500px;height:1px;background:#e5e5e5"></div>
<div class="t" style="left:1189px;top:122px;font-size:14px;color:#1652a6">业务管理</div>
<div class="t" style="left:1269px;top:122px;font-size:14px;color:#333">域名管理</div>
<div class="t" style="left:1359px;top:122px;font-size:14px;color:#333">虚机管理</div>
<div class="t" style="left:1449px;top:122px;font-size:14px;color:#333">服务器管理</div>
<div class="t" style="left:1541px;top:122px;font-size:14px;color:#333">Mssql管理</div>
<div class="t" style="left:1632px;top:122px;font-size:14px;color:#333">最近到期</div>
<div class="a" style="left:1269px;top:153px;width:420px;height:0;border-top:1px dashed #d0d0d0"></div>
<div class="t" style="left:1189px;top:165px;font-size:14px;color:#1652a6">域名服务</div>
<div class="t" style="left:1269px;top:165px;font-size:14px;color:#333">域名转入</div>
<div class="t" style="left:1359px;top:165px;font-size:14px;color:#333">域名转出</div>
<div class="t" style="left:1449px;top:165px;font-size:14px;color:#333">模板过户</div>
<div class="t" style="left:1539px;top:165px;font-size:14px;color:#333">模板管理</div>
<div class="a" style="left:1269px;top:197px;width:420px;height:0;border-top:1px dashed #d0d0d0"></div>
<div class="t" style="left:1189px;top:209px;font-size:14px;color:#1652a6">财务管理</div>
<div class="t" style="left:1269px;top:209px;font-size:14px;color:#333">在线充值</div>
<div class="t" style="left:1359px;top:209px;font-size:14px;color:#333">财务明细</div>
<div class="t" style="left:1449px;top:209px;font-size:14px;color:#333">发票索取</div>
<div class="t" style="left:1539px;top:209px;font-size:14px;color:#333">优惠券</div>
<div class="a" style="left:1269px;top:240px;width:420px;height:0;border-top:1px dashed #d0d0d0"></div>
<div class="t" style="left:1189px;top:252px;font-size:14px;color:#1652a6">账号管理</div>
<div class="t" style="left:1269px;top:252px;font-size:14px;color:#333">修改资料</div>
<div class="t" style="left:1359px;top:252px;font-size:14px;color:#333">密码修改</div>
<div class="t" style="left:1449px;top:252px;font-size:14px;color:#333">密保修改</div>
<div class="t" style="left:1539px;top:252px;font-size:14px;color:#333">账号认证</div>
<div class="t" style="left:1629px;top:252px;font-size:14px;color:#333">我的价格</div>
<div class="a" style="left:1269px;top:284px;width:420px;height:0;border-top:1px dashed #d0d0d0"></div>
<div class="t" style="left:1189px;top:296px;font-size:14px;color:#1652a6">联系我们</div>
<div class="t" style="left:1269px;top:296px;font-size:14px;color:#333">提交工单</div>
<div class="t" style="left:1359px;top:296px;font-size:14px;color:#333">查看回复</div>
<div class="t" style="left:1449px;top:296px;font-size:14px;color:#333">在线客服</div>
<div class="t" style="left:1539px;top:296px;font-size:14px;color:#333">电话助手</div>
</div>
<!-- annotations -->
<div class="a" style="left:1521px;top:3px;width:194px;height:34px;border:3px solid #f41010;border-radius:4px"></div>
<div class="a" style="left:785px;top:191px;width:113px;height:54px;border:3px solid #f41010;border-radius:4px"></div>
<svg class="a" style="left:1400px;top:25px" width="130" height="50" viewBox="0 0 130 50"><path d="M34,35.8 L103.5,13.9 L103.8,19 L113,8.8 L100,6.3 L102.5,10.7 Z" fill="#f41010"/></svg>
<svg class="a" style="left:1405px;top:46px" width="25" height="25" viewBox="0 0 25 25"><circle cx="12.4" cy="12.35" r="9.3" fill="none" stroke="#f41010" stroke-width="1.3"/><text x="12.6" y="18" font-family="Liberation Sans" font-size="16.5" fill="#f41010" text-anchor="middle">1</text></svg>
<svg class="a" style="left:910px;top:207px" width="25" height="25" viewBox="0 0 25 25"><circle cx="12.5" cy="12.3" r="9.3" fill="none" stroke="#f41010" stroke-width="1.3"/><text x="12.4" y="18" font-family="Liberation Sans" font-size="16.5" fill="#f41010" text-anchor="middle">2</text></svg>

</body></html>
